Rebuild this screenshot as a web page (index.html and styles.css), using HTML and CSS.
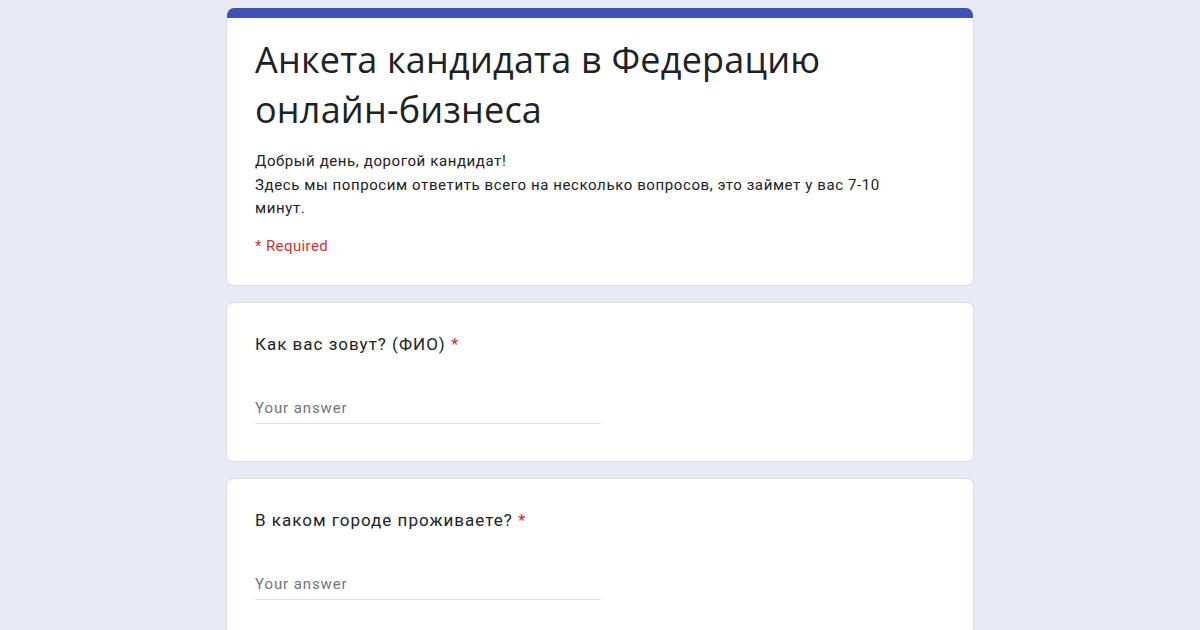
FILE: index.html
```html
<!DOCTYPE html>
<html lang="ru">
<head>
<meta charset="utf-8">
<title>Анкета кандидата в Федерацию онлайн-бизнеса</title>
<link rel="stylesheet" href="styles.css">
</head>
<body>
<main class="form">
  <section class="card header-card">
    <div class="accent"></div>
    <div class="header-body">
      <h1 class="title">Анкета кандидата в Федерацию онлайн-бизнеса</h1>
      <p class="desc">Добрый день, дорогой кандидат!<br>Здесь мы попросим ответить всего на несколько вопросов, это займет у вас 7-10 минут.</p>
      <div class="required-note">* Required</div>
    </div>
  </section>
  <section class="card question">
    <div class="q-title">Как вас зовут? (ФИО) <span class="star">*</span></div>
    <div class="answer">Your answer</div>
  </section>
  <section class="card question">
    <div class="q-title">В каком городе проживаете? <span class="star">*</span></div>
    <div class="answer">Your answer</div>
  </section>
</main>
</body>
</html>
```

FILE: styles.css
```css
html, body {
  margin: 0;
  padding: 0;
}
body {
  background: #e9eaf5;
  font-family: Roboto, "Noto Sans", Arial, sans-serif;
  color: #202124;
  height: 630px;
  overflow: hidden;
}
.form {
  width: 748px;
  margin: 8px auto 0;
  display: flex;
  flex-direction: column;
  gap: 16px;
}
.card {
  background: #fff;
  border: 1px solid #dadce0;
  border-radius: 8px;
  box-sizing: border-box;
}
.header-card {
  border-top: none;
  overflow: hidden;
}
.accent {
  height: 10px;
  background: #3f51b5;
}
.header-body {
  padding: 17px 28px 29px;
}
.title {
  margin: 0;
  font-family: "Open Sans", Roboto, sans-serif;
  font-weight: 400;
  font-size: 36px;
  line-height: 50px;
  letter-spacing: 0.2px;
  color: #202124;
}
.desc {
  margin: 15px 0 0;
  max-width: 660px;
  font-size: 15px;
  line-height: 23.5px;
  color: #202124;
  letter-spacing: 0.6px;
}
.required-note {
  margin-top: 15px;
  font-size: 15px;
  line-height: 20px;
  color: #d93025;
  letter-spacing: 0.4px;
}
.question {
  padding: 29px 28px 37px;
}
.q-title {
  font-size: 17px;
  line-height: 24px;
  color: #202124;
  letter-spacing: 1px;
}
.star {
  color: #d93025;
}
.answer {
  margin-top: 42px;
  width: 346px;
  font-size: 15px;
  line-height: 20px;
  padding-bottom: 5px;
  color: #70757a;
  border-bottom: 1px solid #e0e0e0;
  letter-spacing: 0.9px;
}
```
